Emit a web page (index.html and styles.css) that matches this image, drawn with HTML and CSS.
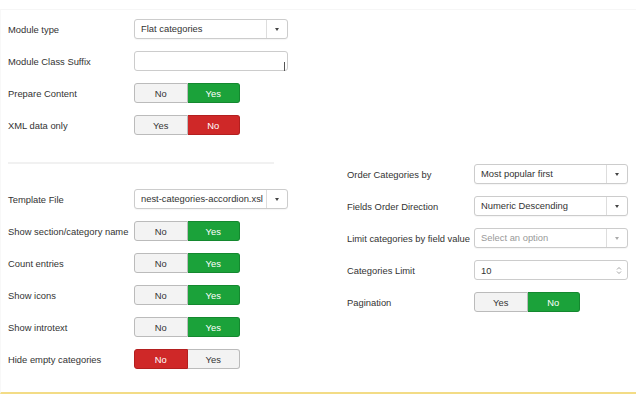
FILE: index.html
```html
<!DOCTYPE html>
<html lang="en">

<head>
    <meta charset="UTF-8">
    <meta name="viewport" content="width=device-width, initial-scale=1.0">
    <title>Module Options</title>
    <link rel="stylesheet" href="styles.css">
</head>

<body>
    <div class="page">
        <div class="col col-left">
            <div class="row">
                <label>Module type</label>
                <div class="select"><span class="value">Flat categories</span><span class="caret"></span></div>
            </div>
            <div class="row">
                <label>Module Class Suffix</label>
                <div class="input"><span class="cursor"></span></div>
            </div>
            <div class="row">
                <label>Prepare Content</label>
                <div class="toggle"><span class="btn">No</span><span class="btn yes on">Yes</span></div>
            </div>
            <div class="row">
                <label>XML data only</label>
                <div class="toggle"><span class="btn">Yes</span><span class="btn no on">No</span></div>
            </div>

            <hr class="sep">

            <div class="row">
                <label>Template File</label>
                <div class="select"><span class="value">nest-categories-accordion.xsl</span><span class="caret"></span></div>
            </div>
            <div class="row">
                <label>Show section/category name</label>
                <div class="toggle"><span class="btn">No</span><span class="btn yes on">Yes</span></div>
            </div>
            <div class="row">
                <label>Count entries</label>
                <div class="toggle"><span class="btn">No</span><span class="btn yes on">Yes</span></div>
            </div>
            <div class="row">
                <label>Show icons</label>
                <div class="toggle"><span class="btn">No</span><span class="btn yes on">Yes</span></div>
            </div>
            <div class="row">
                <label>Show introtext</label>
                <div class="toggle"><span class="btn">No</span><span class="btn yes on">Yes</span></div>
            </div>
            <div class="row">
                <label>Hide empty categories</label>
                <div class="toggle"><span class="btn no on">No</span><span class="btn">Yes</span></div>
            </div>
        </div>

        <div class="col col-right">
            <div class="row">
                <label>Order Categories by</label>
                <div class="select"><span class="value">Most popular first</span><span class="caret"></span></div>
            </div>
            <div class="row">
                <label>Fields Order Direction</label>
                <div class="select"><span class="value">Numeric Descending</span><span class="caret"></span></div>
            </div>
            <div class="row">
                <label>Limit categories by field value</label>
                <div class="select empty"><span class="value">Select an option</span><span class="caret"></span></div>
            </div>
            <div class="row">
                <label>Categories Limit</label>
                <div class="input number"><span class="value">10</span><span class="spin">
                    <svg width="6" height="9" viewBox="0 0 6 9"><path d="M1 3.5 L3 1.5 L5 3.5 M1 5.5 L3 7.5 L5 5.5" fill="none" stroke="#999" stroke-width="0.9"/></svg>
                </span></div>
            </div>
            <div class="row">
                <label>Pagination</label>
                <div class="toggle"><span class="btn">Yes</span><span class="btn yes on">No</span></div>
            </div>
        </div>
    </div>
</body>

</html>
```

FILE: styles.css
```css
body {
    margin: 0;
    font-family: 'Liberation Sans', Arial, sans-serif;
    font-size: 9.4px;
    color: #333;
    background-color: #fff;
}

.page {
    display: flex;
    box-sizing: border-box;
    height: 385px;
    margin-top: 9px;
    border-top: 1px solid #f6f6f6;
    border-left: 1px solid #f8f8f8;
    border-bottom: 2px solid #f3dc86;
    /* Linea amarilla */
}

.col-left {
    width: 282px;
    padding: 9px 0 0 7px;
}

.col-right {
    width: 281px;
    padding: 154px 0 0 57px;
}

.row {
    display: flex;
    align-items: center;
    height: 20px;
    margin-bottom: 12px;
}

.row label {
    width: 126px;
    flex-shrink: 0;
}

.col-right .row label {
    width: 127px;
}

.sep {
    width: 266px;
    margin: 27px 0 25px 0;
    border: none;
    border-top: 2px solid #f1f1f1;
}

/* Selects */
.select {
    display: flex;
    box-sizing: border-box;
    width: 154px;
    height: 20px;
    border: 1px solid #ccc;
    border-radius: 3px;
    background-color: #fff;
    box-shadow: 0 1px 1px rgba(0, 0, 0, 0.04);
}

.select .value {
    flex: 1;
    padding-left: 6px;
    line-height: 18px;
    white-space: nowrap;
    overflow: hidden;
}

.select .caret {
    width: 20px;
    border-left: 1px solid #ddd;
    position: relative;
}

.select .caret::after {
    content: "";
    position: absolute;
    left: 8px;
    top: 8px;
    border-left: 2.5px solid transparent;
    border-right: 2.5px solid transparent;
    border-top: 3px solid #444;
}

.select.empty .value {
    color: #999;
}

.select.empty .caret::after {
    border-top-color: #aaa;
}

/* Inputs */
.input {
    display: flex;
    align-items: center;
    box-sizing: border-box;
    width: 154px;
    height: 20px;
    border: 1px solid #ccc;
    border-radius: 3px;
    background-color: #fff;
    position: relative;
}

.input .cursor {
    position: absolute;
    right: 2px;
    top: 10px;
    width: 1px;
    height: 9px;
    background-color: #555;
}

.input .value {
    flex: 1;
    padding-left: 6px;
}

.input .spin {
    display: flex;
    padding-right: 5px;
}

/* Toggles */
.toggle {
    display: flex;
    width: 106px;
    height: 20px;
}

.toggle .btn {
    flex: 1;
    display: flex;
    align-items: center;
    justify-content: center;
    box-sizing: border-box;
    background-color: #f3f3f3;
    border: 1px solid #bbb;
    color: #333;
}

.toggle .btn:first-child {
    border-radius: 3px 0 0 3px;
}

.toggle .btn:last-child {
    border-radius: 0 3px 3px 0;
    border-left: none;
}

.toggle .btn.yes.on {
    background-color: #1ba23a;
    border-color: #14882f;
    color: #fff;
}

.toggle .btn.no.on {
    background-color: #cf2828;
    border-color: #b31f1f;
    color: #fff;
}
```
